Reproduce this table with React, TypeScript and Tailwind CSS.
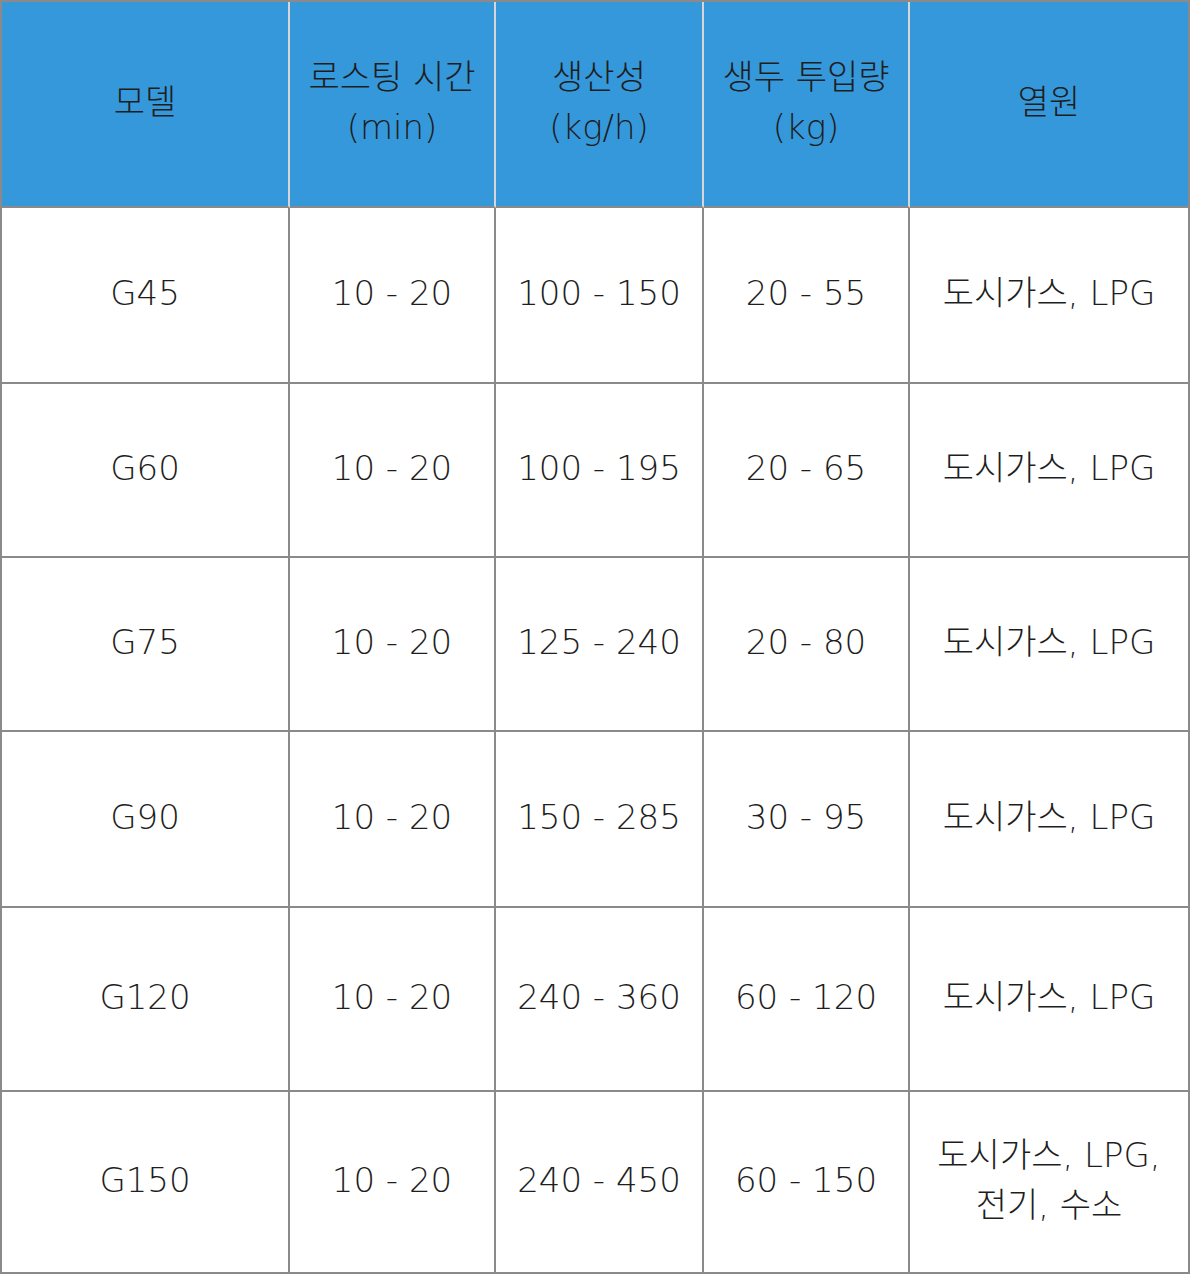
const header = [
  ["모델"],
  ["로스팅 시간", "(min)"],
  ["생산성", "(kg/h)"],
  ["생두 투입량", "(kg)"],
  ["열원"],
];

const rows = [
  { h: "h-[176px]", cells: ["G45", "10 - 20", "100 - 150", "20 - 55", "도시가스, LPG"] },
  { h: "h-[174px]", cells: ["G60", "10 - 20", "100 - 195", "20 - 65", "도시가스, LPG"] },
  { h: "h-[174px]", cells: ["G75", "10 - 20", "125 - 240", "20 - 80", "도시가스, LPG"] },
  { h: "h-[176px]", cells: ["G90", "10 - 20", "150 - 285", "30 - 95", "도시가스, LPG"] },
  { h: "h-[184px]", cells: ["G120", "10 - 20", "240 - 360", "60 - 120", "도시가스, LPG"] },
  { h: "h-[182px]", cells: ["G150", "10 - 20", "240 - 450", "60 - 150", "도시가스, LPG,\n전기, 수소"] },
];

const widths = ["w-[288px]", "w-[206px]", "w-[208px]", "w-[206px]", "w-[280px]"];

export default function App() {
  return (
    <div className="bg-white w-[1190px] h-[1276px] font-['DejaVu_Sans','Noto_Sans_CJK_KR',sans-serif] font-extralight text-[#1e1e1e] text-[34px]">
      <div className="w-[1190px] border-t-2 border-l-2 border-[#8a8a8a]">
        <div className="flex h-[206px] bg-[#3598db]">
          {header.map((lines, i) => (
            <div
              key={i}
              className={`${widths[i]} shrink-0 flex flex-col items-center justify-center leading-[50px] pb-1 border-b-2 border-b-[#8a8a8a] ${
                i === 4 ? "border-r-2 border-r-[#8a8a8a]" : "border-r-2 border-r-[#d6d6d6]"
              }`}
            >
              {lines.map((l) => (
                <span key={l}>{l}</span>
              ))}
            </div>
          ))}
        </div>
        {rows.map((row) => (
          <div key={row.cells[0]} className={`flex ${row.h}`}>
            {row.cells.map((c, i) => (
              <div
                key={i}
                className={`${widths[i]} shrink-0 flex items-center justify-center text-center whitespace-pre-line leading-[50px] pb-1 border-r-2 border-b-2 border-[#8a8a8a]`}
              >
                {c}
              </div>
            ))}
          </div>
        ))}
      </div>
    </div>
  );
}
